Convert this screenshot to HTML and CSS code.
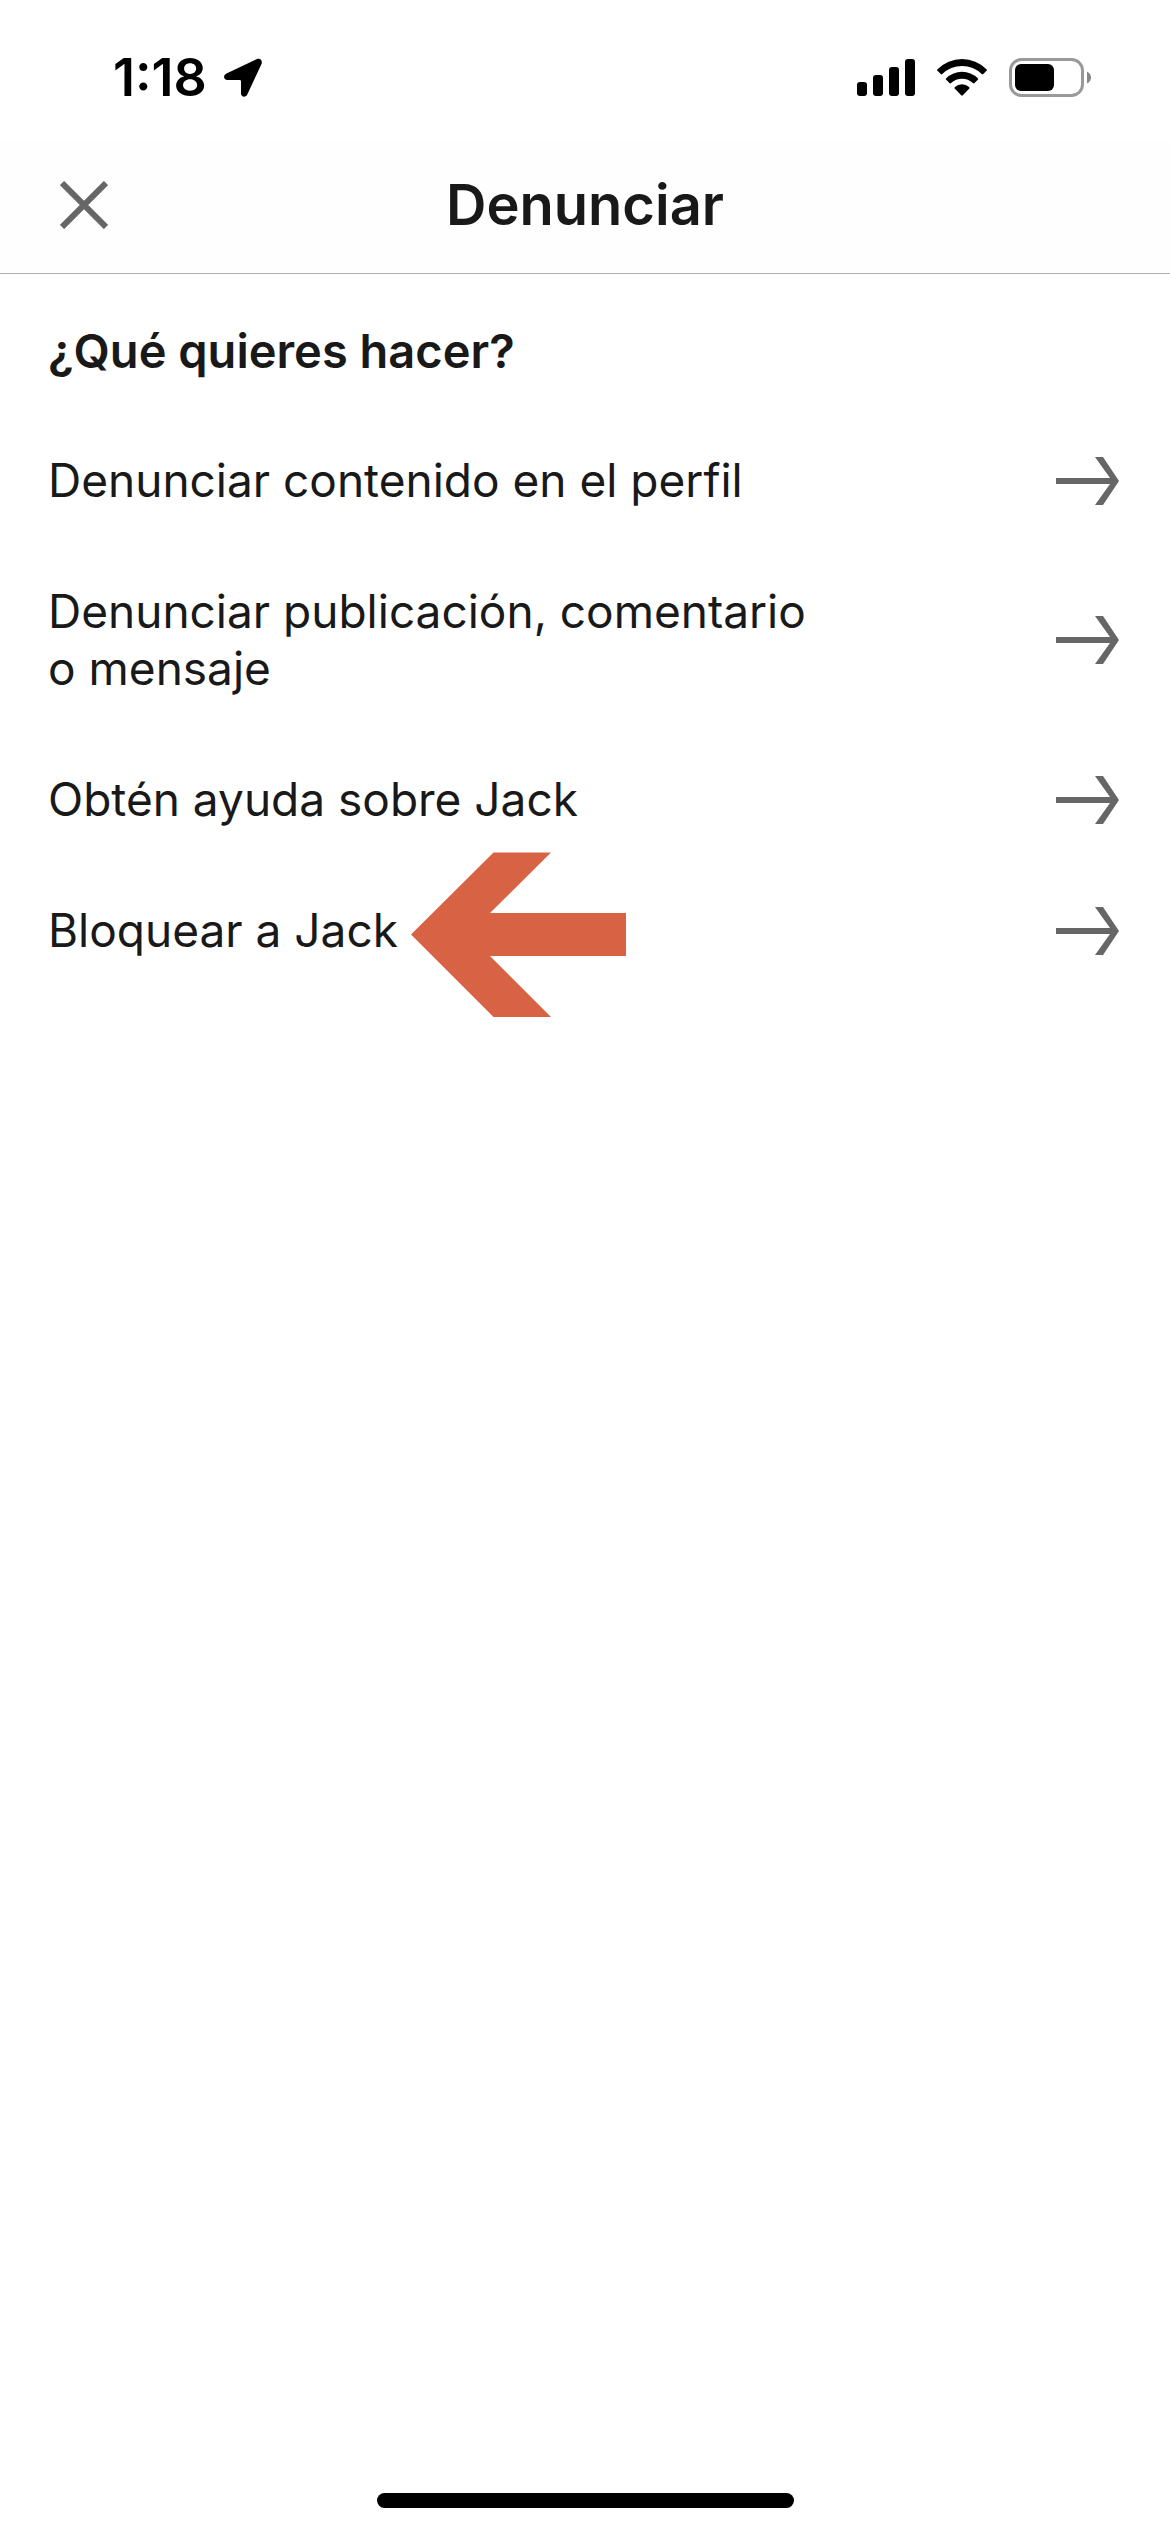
FILE: index.html
```html
<!DOCTYPE html>
<html lang="es">
<head>
<meta charset="utf-8">
<meta name="viewport" content="width=device-width, initial-scale=1">
<title>Denunciar</title>
<link rel="stylesheet" href="styles.css">
</head>
<body>
<div class="screen">
  <div class="status">
    <div class="status-group status-left">
      <span class="time">1:18</span>
      <svg width="40" height="40" viewBox="0 0 40 40" aria-hidden="true"><path d="M3.5 15.5 33.5 1.300c3.600-1.600 6.500 1.300 4.900 4.900L24.300 36.500c-1.500 3.300-6.300 2.700-6.300-1.200V23.500c0-1-.5-1.500-1.500-1.500H4.500C.2 22 0 17.200 3.500 15.500z"/></svg>
    </div>
    <div class="status-group status-right">
      <svg width="58" height="40" viewBox="0 0 58 40" aria-hidden="true"><rect y="24" width="10" height="14" rx="3"/><rect x="16" y="17" width="10" height="21" rx="3"/><rect x="32" y="9" width="10" height="29" rx="3"/><rect x="48" y="1" width="10" height="37" rx="3"/></svg>
      <svg width="50" height="40" viewBox="0 0 50 40" aria-hidden="true"><path d="M.5 11.200a34.500 34.500 0 0 1 49 0q.8.800 0 1.600l-3.200 3.300q-.8.800-1.600 0a28 28 0 0 0-39.400 0q-.8.800-1.600 0L.5 12.800q-.8-.8 0-1.600zM9.200 20.200a22.500 22.500 0 0 1 31.600 0q.8.800 0 1.600l-3.300 3.300q-.8.800-1.600 0a15.800 15.800 0 0 0-21.800 0q-.8.800-1.600 0L9.200 21.800q-.8-.8 0-1.600zM17.900 29.100a10.500 10.500 0 0 1 14.200 0q.8.800 0 1.600l-6.300 6.600q-.8.800-1.600 0l-6.300-6.600q-.8-.8 0-1.600z"/></svg>
      <svg width="82" height="40" viewBox="0 0 82 40" aria-hidden="true"><rect x="1.500" y="1.500" width="72" height="36" rx="11" fill="none" stroke="#999" stroke-width="3"/><rect x="6" y="6" width="39" height="27" rx="6"/><path d="M78 13.500q4 2 4 6t-4 6z" fill="#888"/></svg>
    </div>
  </div>

  <header class="header">
    <button class="close" type="button" aria-label="Cerrar">
      <svg width="48" height="48" viewBox="0 0 48 48" aria-hidden="true"><path d="M2 2 46 46M46 2 2 46" fill="none" stroke="#666" stroke-width="6"/></svg>
    </button>
    <h1 class="title">Denunciar</h1>
  </header>

  <main class="content">
    <h2 class="question">¿Qué quieres hacer?</h2>
    <button class="option" type="button">
      <span class="label">Denunciar contenido en el perfil</span>
      <svg class="arrow" width="64" height="48" viewBox="0 0 64 48" aria-hidden="true"><path d="M0 21H54L39 0H47L63 24 47 48H39L54 27H0z"/></svg>
    </button>
    <button class="option" type="button">
      <span class="label">Denunciar publicación, comentario o mensaje</span>
      <svg class="arrow" width="64" height="48" viewBox="0 0 64 48" aria-hidden="true"><path d="M0 21H54L39 0H47L63 24 47 48H39L54 27H0z"/></svg>
    </button>
    <button class="option" type="button">
      <span class="label">Obtén ayuda sobre Jack</span>
      <svg class="arrow" width="64" height="48" viewBox="0 0 64 48" aria-hidden="true"><path d="M0 21H54L39 0H47L63 24 47 48H39L54 27H0z"/></svg>
    </button>
    <button class="option" type="button">
      <span class="label">Bloquear a Jack
        <svg class="pointer" width="216" height="166" viewBox="0 0 216 166" aria-hidden="true"><path d="M0 82.500 82.500 0.500H140L79 61H215V104H79L140 165H82.500z"/></svg>
      </span>
      <svg class="arrow" width="64" height="48" viewBox="0 0 64 48" aria-hidden="true"><path d="M0 21H54L39 0H47L63 24 47 48H39L54 27H0z"/></svg>
    </button>
  </main>

  <div class="home"></div>
</div>
</body>
</html>
```
FILE: styles.css
```css
* {
  box-sizing: border-box;
}

body {
  margin: 0;
  background: #fff;
  color: #191919;
  font-family: Inter, "Liberation Sans", sans-serif;
}

button {
  border: 0;
  padding: 0;
  background: none;
  color: inherit;
  font: inherit;
}

svg {
  display: block;
  flex: none;
}

.screen {
  display: flex;
  flex-direction: column;
  min-height: 100vh;
}

.status {
  display: flex;
  justify-content: space-between;
  padding: 48px 79px 33px 113px;
  color: #000;
}

.status-group {
  display: flex;
  align-items: center;
}

.status-left {
  gap: 16px;
}

.status-right {
  gap: 22px;
}

.time {
  font-size: 52px;
  font-weight: 600;
  line-height: 60px;
}

.header {
  display: grid;
  grid-template-columns: 48px 1fr 48px;
  align-items: center;
  padding: 27px 60px 31px;
  border-bottom: 1px solid #b0b0b0;
  background: #fefefe;
}

.title {
  margin: 0;
  font-size: 56px;
  font-weight: 600;
  line-height: 74px;
  text-align: center;
}

.content {
  flex: 1;
  padding: 48px 50px 0 48px;
}

.question {
  margin: 0 0 36px;
  font-size: 47px;
  font-weight: 600;
  line-height: 57px;
}

.option {
  display: flex;
  align-items: center;
  justify-content: space-between;
  width: 100%;
  padding: 37px 0;
  font-size: 46px;
  line-height: 57px;
  text-align: left;
}

.label {
  position: relative;
  max-width: 73%;
}

.arrow {
  fill: #666;
}

.pointer {
  position: absolute;
  top: -50px;
  left: calc(100% + 13px);
  fill: #d86344;
}

.home {
  align-self: center;
  width: 417px;
  height: 15px;
  margin-bottom: 24px;
  border-radius: 8px;
  background: #000;
}
```
